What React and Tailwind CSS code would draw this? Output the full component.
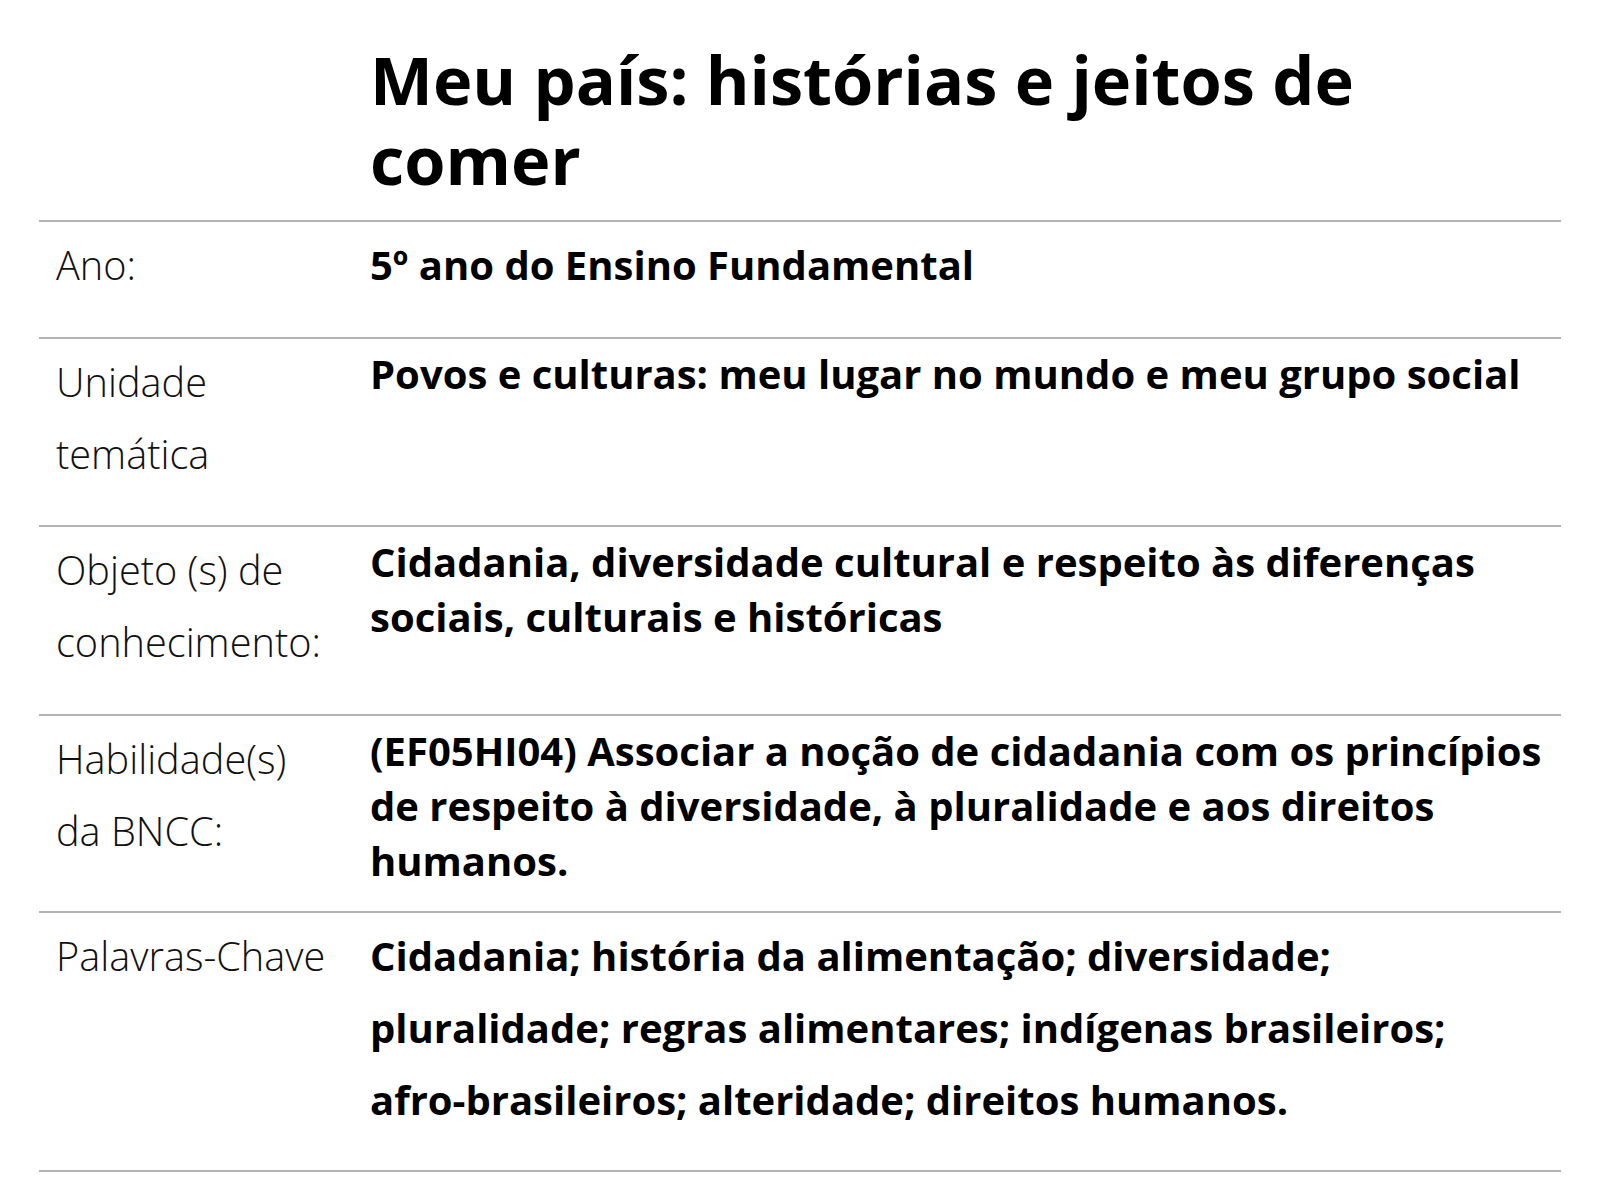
const rows = [
  {
    label: ['Ano:'],
    value: '5º ano do Ensino Fundamental',
    valueLead: 'leading-[72px]',
    pad: 'pb-[36px]',
  },
  {
    label: ['Unidade', 'temática'],
    value: 'Povos e culturas: meu lugar no mundo e meu grupo social',
    valueLead: 'leading-[55px]',
    pad: 'pb-[35px]',
  },
  {
    label: ['Objeto (s) de', 'conhecimento:'],
    value: 'Cidadania, diversidade cultural e respeito às diferenças sociais, culturais e históricas',
    valueLead: 'leading-[55px]',
    pad: 'pb-[36px]',
  },
  {
    label: ['Habilidade(s)', 'da BNCC:'],
    value: '(EF05HI04) Associar a noção de cidadania com os princípios de respeito à diversidade, à pluralidade e aos direitos humanos.',
    valueLead: 'leading-[55px]',
    pad: 'pb-[23px]',
  },
  {
    label: ['Palavras-Chave'],
    value: (
      <>
        Cidadania; história da alimentação; diversidade; pluralidade; regras alimentares; indígenas brasileiros;{' '}
        <span className="whitespace-nowrap">afro-brasileiros;</span> alteridade; direitos humanos.
      </>
    ),
    valueLead: 'leading-[72px]',
    pad: 'pb-[34px]',
  },
];

export default function App() {
  return (
    <div className="min-h-[1200px] bg-white px-[39px] font-['Open_Sans',sans-serif] text-black">
      <div className="grid grid-cols-[331px_1fr] pt-[40px] pb-[20px]">
        <div />
        <h1 className="text-[66.7px] font-bold leading-[80px]">
          Meu país: histórias e jeitos de comer
        </h1>
      </div>

      {rows.map((row) => (
        <div key={row.label.join(' ')} className={`grid grid-cols-[331px_1fr] border-t-2 border-[#b3b3b3] pt-[7px] ${row.pad}`}>
          <div className="pl-[17px] text-[39.7px] font-light leading-[72px] text-[#111]">
            {row.label.map((line) => (
              <div key={line}>{line}</div>
            ))}
          </div>
          <p className={`text-[40px] font-bold ${row.valueLead}`}>{row.value}</p>
        </div>
      ))}
      <div className="border-t-2 border-[#b3b3b3]" />
    </div>
  );
}
